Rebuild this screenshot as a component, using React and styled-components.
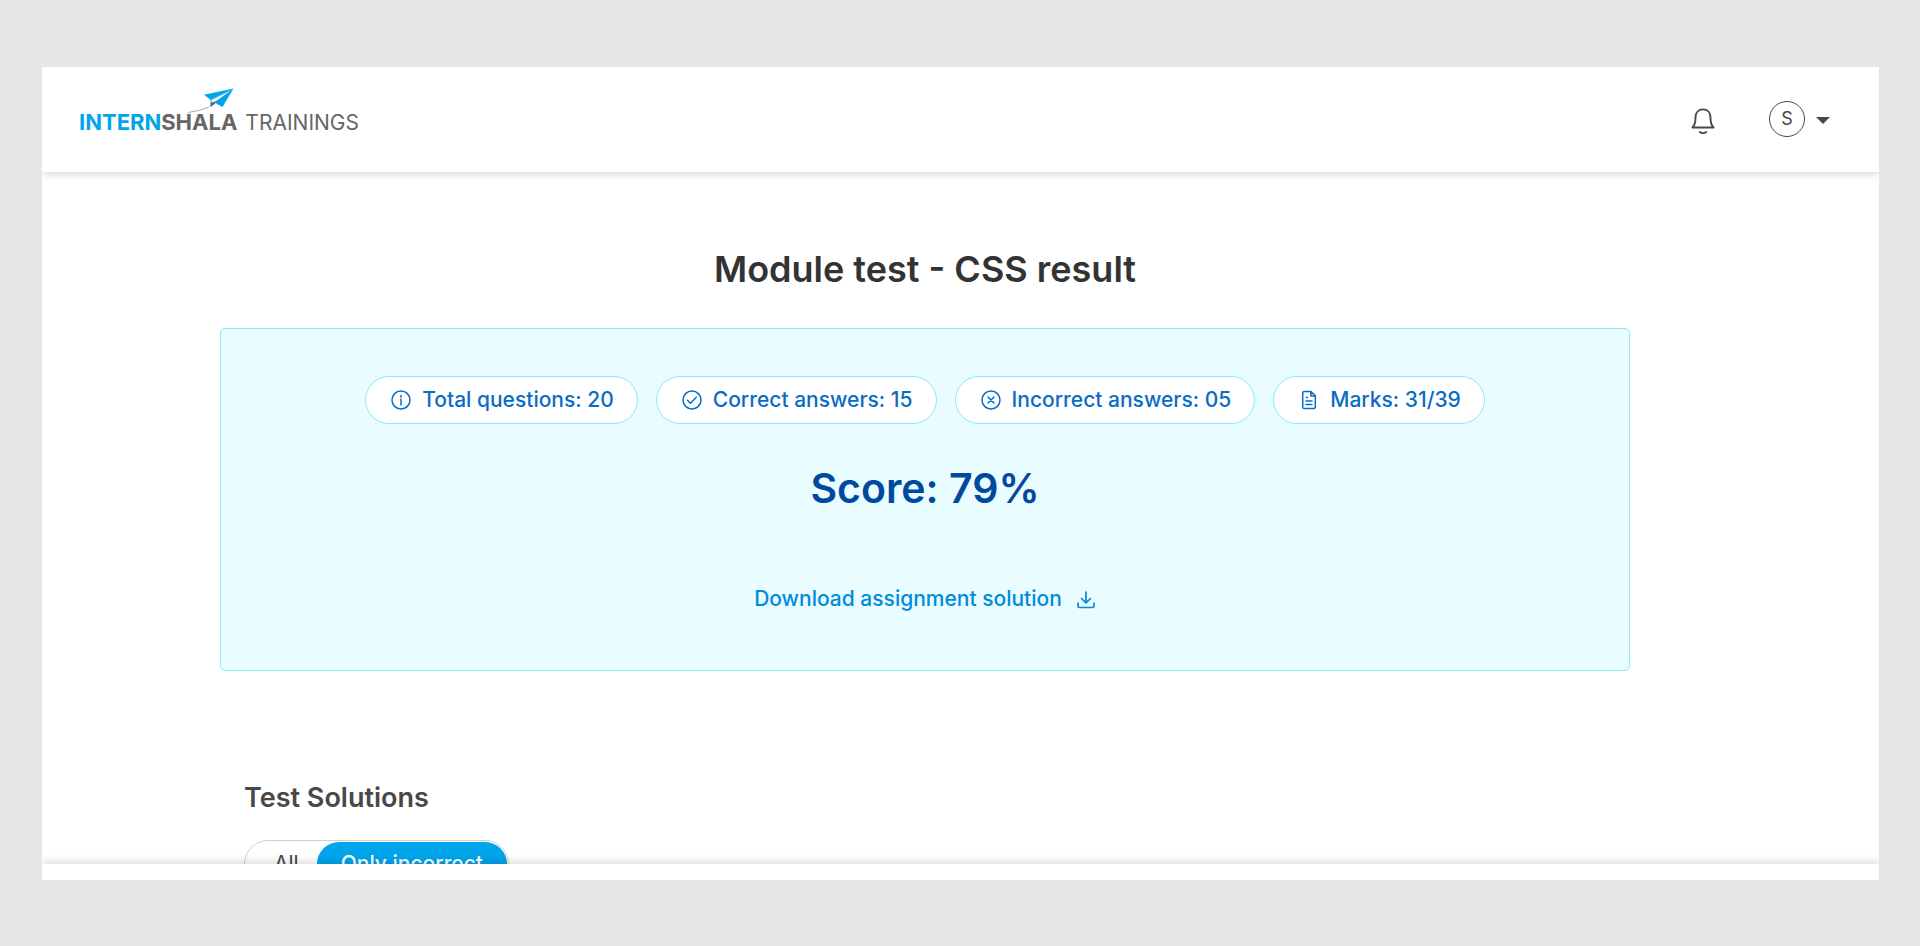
import React, { useState } from "react";
import styled, { createGlobalStyle } from "styled-components";

const GlobalStyle = createGlobalStyle`
  *, *::before, *::after { box-sizing: border-box; }
  body {
    margin: 0;
    background: #e6e6e6;
    color: #333;
    font-family: Inter, "Liberation Sans", sans-serif;
  }
  button { font: inherit; color: inherit; background: none; border: 0; padding: 0; cursor: pointer; }
  h1, h2, p, ul { margin: 0; padding: 0; }
  svg { display: block; flex: none; }
`;

const Backdrop = styled.div`
  display: flex;
  height: 100vh;
  padding: 67px 41px 66px 42px;
`;

const Screen = styled.div`
  flex: 1;
  min-width: 0;
  display: flex;
  flex-direction: column;
  overflow: hidden;
  background: #fff;
`;

const Header = styled.header`
  z-index: 1;
  flex: none;
  display: flex;
  align-items: center;
  justify-content: space-between;
  height: 105px;
  padding: 0 49px 2px 37px;
  background: #fff;
  box-shadow: 0 2px 8px rgba(0, 0, 0, 0.16);
`;

const Logo = styled.a`
  position: relative;
  display: flex;
  align-items: baseline;
  padding-top: 8px;
  font-size: 21px;
  line-height: 30px;
  color: #666;
  text-decoration: none;
`;

const LogoPlane = styled.svg`
  position: absolute;
  left: 108px;
  top: -11px;
`;

const LogoBold = styled.span`
  font-size: 22px;
  font-weight: 700;
  color: ${(p) => (p.$accent ? "#00a5ec" : "#666")};
`;

const LogoLight = styled.span`
  margin-left: 8px;
  font-weight: 400;
`;

const Tools = styled.div`
  display: flex;
  align-items: center;
  gap: 54px;
`;

const BellButton = styled.button`
  padding-top: 6px;
`;

const Account = styled.button`
  display: flex;
  align-items: center;
  gap: 11px;
`;

const Avatar = styled.span`
  display: grid;
  place-items: center;
  width: 36px;
  height: 36px;
  border: 1px solid #484848;
  border-radius: 50%;
  font-size: 18px;
  line-height: 24px;
  color: #484848;
`;

const Caret = styled.svg`
  margin-top: 4px;
`;

const Main = styled.main`
  flex: 1;
  min-height: 0;
  overflow: hidden;
  padding: 73px 249px 0 178px;
`;

const Title = styled.h1`
  font-size: 36px;
  line-height: 48px;
  font-weight: 600;
  text-align: center;
  color: #333;
`;

const ResultCard = styled.section`
  display: flex;
  flex-direction: column;
  align-items: center;
  margin-top: 35px;
  padding: 47px 24px 56px;
  border: 1px solid #8de8fc;
  border-radius: 5px;
  background: #e9fcff;
`;

const Chips = styled.ul`
  display: flex;
  flex-wrap: wrap;
  justify-content: center;
  gap: 18px;
  list-style: none;
`;

const Chip = styled.li`
  display: flex;
  align-items: center;
  gap: 9px;
  height: 48px;
  padding: 0 23px;
  border: 1px solid #8de8fc;
  border-radius: 24px;
  background: #fff;
  font-size: 21px;
  line-height: 30px;
  font-weight: 500;
  color: #0a6cc4;
  white-space: nowrap;
`;

const Score = styled.p`
  margin-top: 37px;
  font-size: 41px;
  line-height: 54px;
  font-weight: 600;
  color: #00499c;
`;

const Download = styled.a`
  display: flex;
  align-items: center;
  gap: 14px;
  margin-top: 69px;
  font-size: 21px;
  line-height: 30px;
  font-weight: 500;
  color: #008bdc;
  text-decoration: none;
`;

const Solutions = styled.section`
  margin: 109px 24px 0;
`;

const SubTitle = styled.h2`
  font-size: 27px;
  line-height: 36px;
  font-weight: 600;
  color: #484848;
`;

const Toggle = styled.div`
  display: inline-flex;
  margin-top: 24px;
  padding: 1px;
  border: 1px solid #d0d0d0;
  border-radius: 24px;
`;

const ToggleOption = styled.button`
  height: 44px;
  padding: ${(p) => (p.$active ? "0 24px" : "0 18px 0 28px")};
  border-radius: 22px;
  font-size: 21px;
  line-height: 30px;
  font-weight: ${(p) => (p.$active ? 500 : 400)};
  color: ${(p) => (p.$active ? "#fff" : "#484848")};
  background: ${(p) => (p.$active ? "#00a5ec" : "transparent")};
`;

const BottomBar = styled.footer`
  z-index: 1;
  flex: none;
  height: 16px;
  background: #fff;
  box-shadow: 0 -2px 8px rgba(0, 0, 0, 0.16);
`;

const chipIcons = {
  info: (
    <>
      <circle cx="12" cy="12" r="9" />
      <path d="M12 11v6M12 7.6v1.4" />
    </>
  ),
  check: (
    <>
      <circle cx="12" cy="12" r="9" />
      <path d="M7.5 12.2l3 3 5.8-6" />
    </>
  ),
  cross: (
    <>
      <circle cx="12" cy="12" r="9" />
      <path d="M9 9l6 6M15 9l-6 6" />
    </>
  ),
  file: (
    <path d="M14 3.5H7.3A1.6 1.6 0 0 0 5.7 5.1v13.8a1.6 1.6 0 0 0 1.6 1.6h9.4a1.6 1.6 0 0 0 1.6-1.6V7.8zM13.8 3.7V8h4.3M9.3 9.5h1.2M9 13h6M9 16.5h6" />
  ),
};

function ChipIcon({ name }) {
  return (
    <svg width="24" height="24" viewBox="0 0 24 24" fill="none" stroke="currentColor" strokeWidth="1.5" strokeLinecap="round" strokeLinejoin="round" aria-hidden="true">
      {chipIcons[name]}
    </svg>
  );
}

const stats = [
  { icon: "info", text: "Total questions: 20" },
  { icon: "check", text: "Correct answers: 15" },
  { icon: "cross", text: "Incorrect answers: 05" },
  { icon: "file", text: "Marks: 31/39" },
];

const filters = ["All", "Only incorrect"];

export default function App() {
  const [filter, setFilter] = useState("Only incorrect");
  return (
    <>
      <GlobalStyle />
      <Backdrop>
        <Screen>
          <Header>
            <Logo href="#">
              <LogoPlane width="48" height="26" viewBox="0 0 48 26" aria-hidden="true">
                <path d="M46.5 .5L17 6.8l6.5 4.9zM46.5 .5L27.5 14.5l8 4.5z" fill="#00a5ec" />
                <path d="M46.5 .5L23.5 11.7V19z" fill="#00a5ec" />
                <path d="M44 2.6L24.6 12v4z" fill="#fff" />
                <path d="M23.7 19V15l3.8-1.500 1.500 1z" fill="#666" />
                <path d="M1 24.500q12-1.500 21-5.500" fill="none" stroke="#aaa" />
              </LogoPlane>
              <LogoBold $accent>INTERN</LogoBold>
              <LogoBold>SHALA</LogoBold>
              <LogoLight>TRAININGS</LogoLight>
            </Logo>
            <Tools>
              <BellButton type="button" aria-label="Notifications">
                <svg width="24" height="27" viewBox="0 0 24 27" fill="none" stroke="#484848" strokeWidth="1.9">
                  <path d="M1.5 19.5H22.5C20 17 19.5 14 19.5 9.5C19.5 4.5 16.5 1.4 12 1.4S4.5 4.5 4.5 9.5C4.5 14 4 17 1.5 19.5Z" strokeLinejoin="round" />
                  <path d="M8.3 23.600c1.200 2 6.200 2 7.400 0" />
                </svg>
              </BellButton>
              <Account type="button" aria-label="Account menu">
                <Avatar>S</Avatar>
                <Caret width="14" height="7" viewBox="0 0 14 7" fill="#484848">
                  <path d="M0 0h14L7 7z" />
                </Caret>
              </Account>
            </Tools>
          </Header>
          <Main>
            <Title>Module test - CSS result</Title>
            <ResultCard>
              <Chips>
                {stats.map((s) => (
                  <Chip key={s.icon}>
                    <ChipIcon name={s.icon} />
                    {s.text}
                  </Chip>
                ))}
              </Chips>
              <Score>Score: 79%</Score>
              <Download href="#">
                Download assignment solution
                <svg width="20" height="20" viewBox="0 0 20 20" fill="none" stroke="currentColor" strokeWidth="1.7" strokeLinecap="round" strokeLinejoin="round" aria-hidden="true">
                  <path d="M10 3v10.5M5.5 9.5L10 13.8l4.5-4.3M2 14v3a1.5 1.5 0 0 0 1.5 1.5h13A1.5 1.5 0 0 0 18 17v-3" />
                </svg>
              </Download>
            </ResultCard>
            <Solutions>
              <SubTitle>Test Solutions</SubTitle>
              <Toggle>
                {filters.map((f) => (
                  <ToggleOption key={f} type="button" $active={f === filter} aria-pressed={f === filter} onClick={() => setFilter(f)}>
                    {f}
                  </ToggleOption>
                ))}
              </Toggle>
            </Solutions>
          </Main>
          <BottomBar />
        </Screen>
      </Backdrop>
    </>
  );
}
